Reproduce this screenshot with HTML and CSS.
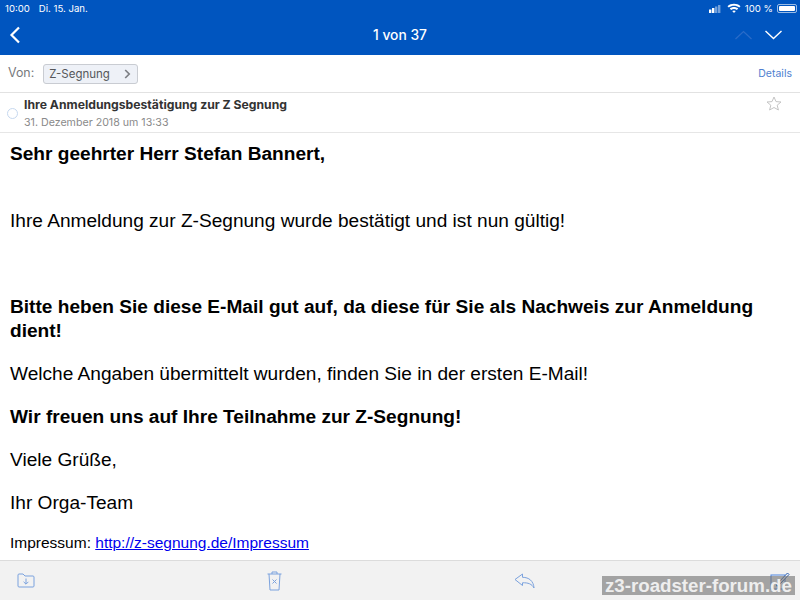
FILE: index.html
```html
<!DOCTYPE html>
<html lang="de">

<head>
    <meta charset="UTF-8" />
    <title>Z-Segnung</title>
    <link rel="stylesheet" href="styles.css">
</head>

<body>
    <div class="screen">
        <div class="topbar">
            <div class="status">
                <span class="status-time">10:00</span>
                <span class="status-date">Di. 15. Jan.</span>
                <span class="status-right">
                    <svg class="signal" width="14" height="9" viewBox="0 0 14 9">
                        <rect x="0" y="5.5" width="2.4" height="3.5" fill="#fff" />
                        <rect x="3" y="4" width="2.4" height="5" fill="#fff" />
                        <rect x="6" y="2.5" width="2.4" height="6.5" fill="#fff" opacity="0.45" />
                        <rect x="9" y="1" width="2.4" height="8" fill="#fff" opacity="0.45" />
                    </svg>
                    <svg class="wifi" width="14" height="10" viewBox="0 0 14 10">
                        <path d="M0.5 3.2C4.2 0 9.8 0 13.5 3.2L12.2 4.6C9.2 2.1 4.8 2.1 1.8 4.6Z" fill="#fff" />
                        <path d="M2.8 5.6C5.2 3.6 8.8 3.6 11.2 5.6L9.9 7C8.2 5.6 5.8 5.6 4.1 7Z" fill="#fff" />
                        <path d="M5.2 8C6.2 7.2 7.8 7.2 8.8 8L7 10Z" fill="#fff" />
                    </svg>
                    <span class="status-battery-text">100 %</span>
                    <span class="battery"><span class="battery-fill"></span></span>
                </span>
            </div>
            <div class="nav">
                <svg class="nav-back" width="12" height="18" viewBox="0 0 12 18">
                    <path d="M10 1.5L2.5 9L10 16.5" fill="none" stroke="#fff" stroke-width="2.2" />
                </svg>
                <div class="nav-title">1 von 37</div>
                <div class="nav-arrows">
                    <svg width="17" height="10" viewBox="0 0 17 10">
                        <path d="M0.5 9L8.5 1.5L16.5 9" fill="none" stroke="#2a6cc8" stroke-width="1.2" />
                    </svg>
                    <svg width="17" height="10" viewBox="0 0 17 10">
                        <path d="M0.5 1L8.5 8.5L16.5 1" fill="none" stroke="#fff" stroke-width="1.4" />
                    </svg>
                </div>
            </div>
        </div>

        <div class="from-row">
            <span class="from-label">Von:</span>
            <span class="from-chip">
                Z-Segnung
                <svg width="7" height="10" viewBox="0 0 7 10">
                    <path d="M1.2 1L5.2 5L1.2 9" fill="none" stroke="#7d7f84" stroke-width="1.7" />
                </svg>
            </span>
            <span class="details">Details</span>
        </div>

        <div class="subject-row">
            <span class="unread-dot"></span>
            <div class="subject-text">
                <div class="subject">Ihre Anmeldungsbestätigung zur Z Segnung</div>
                <div class="date">31. Dezember 2018 um 13:33</div>
            </div>
            <svg class="star" width="16" height="15" viewBox="0 0 16 15">
                <path d="M8 1L10 5.6L15 6L11.2 9.2L12.4 14L8 11.5L3.6 14L4.8 9.2L1 6L6 5.6Z" fill="none" stroke="#c4c4c4" stroke-width="1" />
            </svg>
        </div>

        <div class="mail">
            <p><b>Sehr geehrter Herr Stefan Bannert,</b><br><br></p>
            <p>Ihre Anmeldung zur Z-Segnung wurde bestätigt und ist nun gültig!</p>
            <p><br></p>
            <p><b>Bitte heben Sie diese E-Mail gut auf, da diese für Sie als Nachweis zur Anmeldung dient!</b></p>
            <p>Welche Angaben übermittelt wurden, finden Sie in der ersten E-Mail!</p>
            <p><b>Wir freuen uns auf Ihre Teilnahme zur Z-Segnung!</b></p>
            <p>Viele Grüße,</p>
            <p>Ihr Orga-Team</p>
            <p class="small">Impressum: <a href="#">http://z-segnung.de/Impressum</a></p>
        </div>

        <div class="toolbar">
            <svg width="18" height="15" viewBox="0 0 18 15">
                <path d="M1 13V2C1 1.4 1.4 1 2 1H6L8 3H16C16.6 3 17 3.4 17 4V13C17 13.6 16.6 14 16 14H2C1.4 14 1 13.6 1 13Z" fill="none" stroke="#7ba2de" />
                <path d="M9 5.5V11M6.6 8.8L9 11.2L11.4 8.8" fill="none" stroke="#7ba2de" />
            </svg>
            <svg width="15" height="20" viewBox="0 0 15 20">
                <path d="M0.5 3H14.5M5 3V1H10V3M2 3L3 19H12L13 3" fill="none" stroke="#7ba2de" />
                <path d="M5.5 8.5L9.5 12.5M9.5 8.5L5.5 12.5" fill="none" stroke="#7ba2de" />
            </svg>
            <svg width="21" height="16" viewBox="0 0 21 16">
                <path d="M1 6.5L8.5 1V4.3C15 4.3 19.5 8 20 15C18 11 14 9.5 8.5 9.8V12.5Z" fill="none" stroke="#7ba2de" stroke-linejoin="round" />
            </svg>
            <svg class="compose" width="20" height="18" viewBox="0 0 20 18">
                <rect x="1" y="3" width="14" height="14" fill="none" stroke="#4f86e0" />
                <path d="M7 12L17.5 1L19 2.5L8.5 13.5L6.5 14Z" fill="#f2f2f2" stroke="#2c5fb0" />
            </svg>
        </div>

        <div class="watermark">z3-roadster-forum.de</div>
    </div>
</body>

</html>
```

FILE: styles.css
```css
* {
    box-sizing: border-box;
}

html,
body {
    margin: 0;
    padding: 0;
    height: 100%;
    overflow: hidden;
}

body {
    font-family: "Liberation Sans", Arial, sans-serif;
    background-color: white;
}

.screen {
    position: relative;
    display: flex;
    flex-direction: column;
    height: 600px;
}

.topbar {
    background-color: #0055bf;
    color: white;
    height: 55px;
    flex: none;
}

.status {
    display: flex;
    align-items: center;
    height: 16px;
    padding: 0 3px 0 5px;
    font-size: 9.6px;
    font-family: "Inter", sans-serif;
}

.status-date {
    margin-left: 9px;
}

.status-right {
    margin-left: auto;
    display: flex;
    align-items: center;
    gap: 4px;
}

.battery {
    display: block;
    width: 20px;
    height: 9px;
    border: 1px solid rgba(255, 255, 255, 0.6);
    border-radius: 2px;
    padding: 1px;
}

.battery-fill {
    display: block;
    height: 100%;
    background-color: white;
    border-radius: 1px;
}

.nav {
    display: grid;
    grid-template-columns: 1fr auto 1fr;
    align-items: center;
    height: 39px;
    padding: 0 18px 0 9px;
}

.nav-back {
    margin-top: -2px;
}

.nav-title {
    font-family: "Inter", sans-serif;
    font-size: 13.8px;
    font-weight: 500;
    margin-top: -2px;
    padding-left: 9px;
}

.nav-arrows {
    display: flex;
    justify-content: flex-end;
    gap: 13px;
    margin-top: -2px;
}

.from-row {
    display: flex;
    align-items: center;
    height: 38px;
    flex: none;
    padding: 0 8px;
    border-bottom: 1px solid #e2e2e2;
    font-family: "Inter", sans-serif;
}

.from-label {
    font-size: 12.4px;
    color: #77797c;
    margin-right: 9px;
    margin-top: -2px;
}

.from-chip {
    display: flex;
    align-items: center;
    justify-content: space-between;
    width: 95px;
    height: 20px;
    padding: 0 6px 0 5px;
    font-size: 11.5px;
    color: #55575a;
    background-color: #eef1f7;
    border: 1px solid #c9ccd2;
    border-radius: 3px;
}

.details {
    margin-left: auto;
    font-size: 10.5px;
    color: #4f7fd0;
}

.subject-row {
    position: relative;
    display: flex;
    align-items: center;
    height: 40px;
    flex: none;
    padding-left: 7px;
    border-bottom: 1px solid #e6e6e6;
    font-family: "Inter", sans-serif;
}

.unread-dot {
    width: 11px;
    height: 11px;
    margin-top: 1px;
    border: 1px solid #c6d8ef;
    border-radius: 50%;
    flex: none;
}

.subject-text {
    margin-left: 6px;
    padding-top: 2px;
}

.subject {
    font-size: 12.2px;
    font-weight: 700;
    color: #333;
    line-height: 14px;
}

.date {
    font-size: 10.65px;
    color: #8a8a8a;
    line-height: 14px;
    margin-top: 4px;
}

.star {
    position: absolute;
    top: 3px;
    right: 18px;
}

.mail {
    flex: 1;
    overflow: hidden;
    padding: 9px 10px 0;
    font-size: 19.1px;
    line-height: 24px;
    color: #000;
}

.mail p {
    margin: 0 0 19px;
}

.mail .small {
    font-size: 15.5px;
    line-height: 20px;
    margin-top: -1px;
}

.mail a {
    color: #0000ee;
}

.toolbar {
    display: flex;
    gap: 232px;
    align-items: center;
    height: 40px;
    flex: none;
    padding: 0 10px 0 17px;
    background-color: #f2f2f2;
    border-top: 1px solid #dcdcdc;
}

.compose {
    margin-left: auto;
}

.watermark {
    position: absolute;
    left: 602px;
    top: 576px;
    width: 193px;
    height: 19px;
    padding-left: 3px;
    font-size: 18.7px;
    line-height: 20px;
    font-weight: 700;
    white-space: nowrap;
    color: #eeeeee;
    background-color: rgba(110, 110, 110, 0.6);
}
```
